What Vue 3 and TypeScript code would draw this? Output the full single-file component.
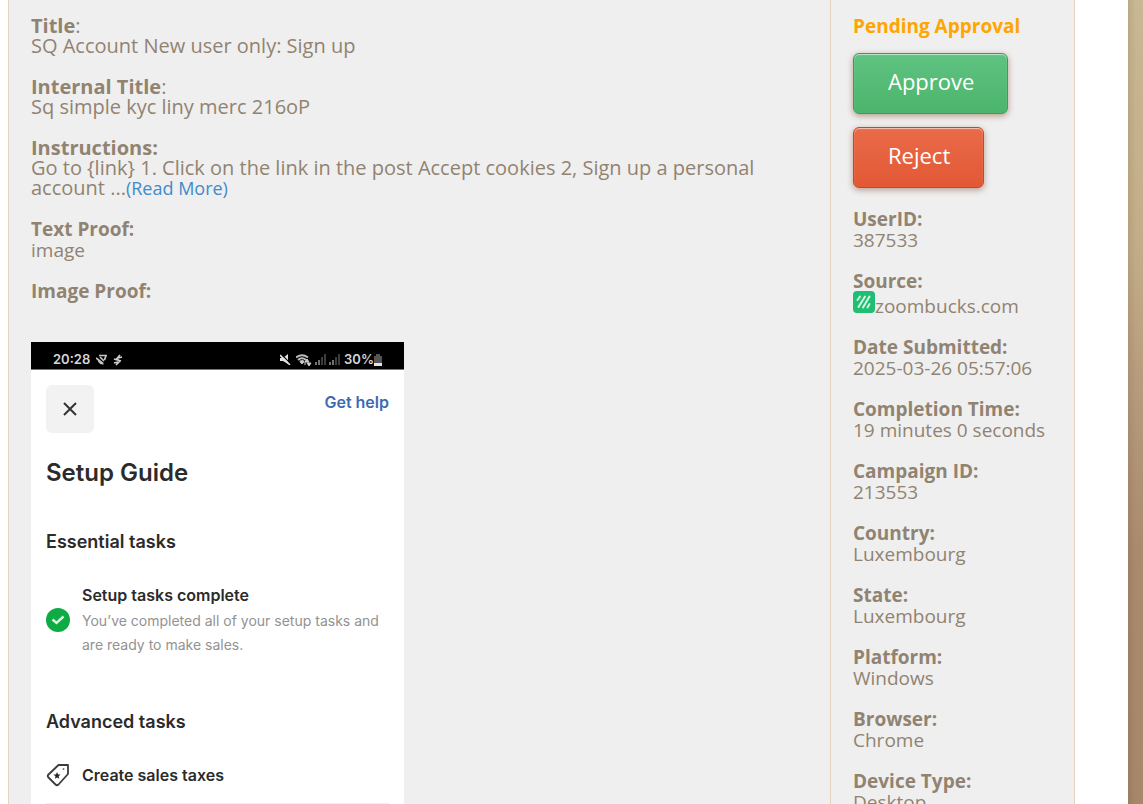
<script setup lang="ts">
interface Field {
  label: string
  value: string
  icon?: boolean
}

const details: Field[] = [
  { label: 'UserID:', value: '387533' },
  { label: 'Source:', value: 'zoombucks.com', icon: true },
  { label: 'Date Submitted:', value: '2025-03-26 05:57:06' },
  { label: 'Completion Time:', value: '19 minutes 0 seconds' },
  { label: 'Campaign ID:', value: '213553' },
  { label: 'Country:', value: 'Luxembourg' },
  { label: 'State:', value: 'Luxembourg' },
  { label: 'Platform:', value: 'Windows' },
  { label: 'Browser:', value: 'Chrome' },
  { label: 'Device Type:', value: 'Desktop' },
]
</script>

<template>
  <div class="page">
    <div class="sheet">
      <main class="submission">
        <dl class="fields large">
          <div>
            <dt><b>Title</b>:</dt>
            <dd>SQ Account New user only: Sign up</dd>
          </div>
          <div>
            <dt><b>Internal Title</b>:</dt>
            <dd>Sq simple kyc liny merc 216oP</dd>
          </div>
          <div>
            <dt><b>Instructions:</b></dt>
            <dd>
              Go to {link} 1. Click on the link in the post Accept cookies 2, Sign up a personal account ...<a class="more" href="#">(Read More)</a>
            </dd>
          </div>
        </dl>
        <dl class="fields">
          <div>
            <dt><b>Text Proof:</b></dt>
            <dd>image</dd>
          </div>
          <div>
            <dt><b>Image Proof:</b></dt>
          </div>
        </dl>

        <section class="phone">
          <div class="status">
            <span>20:28</span>
            <svg class="glyph lead" width="11" height="11" viewBox="0 0 11 11">
              <path d="M3 1.500h7L8.500 6M0 4l7 5.500M2.500 6c.5 3 3 4 5 3.500M4 3l4 4" fill="none" stroke="#c4c4c4" stroke-width="1.700" />
            </svg>
            <svg class="glyph" width="10" height="12" viewBox="0 0 10 12">
              <path d="M7 1 3.500 5 7 7 3 11M1 5l7 2M5 4l4-1M1 9l4-1" fill="none" stroke="#cfcfcf" stroke-width="1.600" />
            </svg>
            <span class="spacer"></span>
            <svg class="glyph" width="11" height="11" viewBox="0 0 11 11">
              <path d="M0 4h3l5-4v10L3 7H0z" fill="#e2e2e2" />
              <path d="M1 0l10 10" stroke="#000" stroke-width="1.200" />
              <path d="M0 1l10 10" stroke="#e2e2e2" stroke-width="1.600" />
            </svg>
            <svg class="glyph wifi" width="16" height="12" viewBox="0 0 16 12">
              <path d="M0 3.500Q6-1 12 3.500M2 6Q6 2.500 10 6M4 8q2-2 4 0" fill="none" stroke="#bdbdbd" stroke-width="2" />
              <path d="M6 10l-1.500-2h3zM11 5l2 3h-4zM13 12l-2-3h4zM9 8v3" fill="#cfcfcf" stroke="#cfcfcf" stroke-width="1" />
            </svg>
            <svg class="glyph bars" width="11" height="11" viewBox="0 0 11 11">
              <path d="M0 8h2v3H0zM3 6h2v5H3z" fill="#707070" />
              <path d="M6 3h2v8H6zM9 0h2v11H9z" fill="#3c3c3c" />
            </svg>
            <svg class="glyph bars" width="11" height="11" viewBox="0 0 11 11">
              <path d="M0 8h2v3H0zM3 6h2v5H3z" fill="#707070" />
              <path d="M6 3h2v8H6zM9 0h2v11H9z" fill="#3c3c3c" />
            </svg>
            <span>30%</span>
            <svg class="glyph" width="8" height="12" viewBox="0 0 8 12">
              <path d="M2 0h4v2h2v7H0V2h2z" fill="#555" />
              <path d="M0 9h8v3H0z" fill="#e4e4e4" />
            </svg>
          </div>

          <div class="screen">
            <div class="topbar">
              <button class="close" type="button" aria-label="Close">
                <svg width="14" height="14" viewBox="0 0 14 14">
                  <path d="M1 1l12 12M13 1L1 13" stroke="#333" stroke-width="2" />
                </svg>
              </button>
              <a class="help" href="#">Get help</a>
            </div>
            <h1>Setup Guide</h1>
            <h2>Essential tasks</h2>
            <div class="task">
              <svg width="24" height="24" viewBox="0 0 24 24">
                <circle cx="12" cy="12" r="12" fill="#0cab43" />
                <path d="M6.500 11.500l4 3.500 7-6.500" fill="none" stroke="#d9f6df" stroke-width="2.400" />
              </svg>
              <div>
                <h3>Setup tasks complete</h3>
                <p>You’ve completed all of your setup tasks and are ready to make sales.</p>
              </div>
            </div>
            <h2>Advanced tasks</h2>
            <div class="task row">
              <svg width="24" height="24" viewBox="0 0 24 24">
                <path d="M12.500 2H22v9L12.500 21.500Q11 23 9.500 21.500L2.500 14.500Q1 13 2.500 11.500z" fill="none" stroke="#3c3c3c" stroke-width="1.800" stroke-linejoin="round" />
                <path d="M11 9l1 2.500 2.600.1-2 1.600.7 2.600-2.300-1.400-2.200 1.400.7-2.600-2.100-1.600 2.600-.1z" fill="#222" />
                <circle cx="17.500" cy="6" r="1" fill="#777" />
              </svg>
              <h3>Create sales taxes</h3>
            </div>
          </div>
        </section>
      </main>

      <aside class="review">
        <b class="state">Pending Approval</b>
        <button class="action approve" type="button">Approve</button>
        <button class="action reject" type="button">Reject</button>
        <dl class="fields">
          <div v-for="field in details" :key="field.label">
            <dt><b>{{ field.label }}</b></dt>
            <dd :class="{ source: field.icon }">
              <svg v-if="field.icon" width="22" height="22" viewBox="0 0 22 22">
                <rect width="22" height="22" rx="4" fill="#1fbe72" />
                <path d="M4.500 9l2.500-3.500M5.500 16l6.500-10.500M10 16.500l6.500-11M14.500 16.500l2-3.500" stroke="#d5f7df" stroke-width="2" stroke-linecap="round" />
              </svg>
              <span>{{ field.value }}</span>
            </dd>
          </div>
        </dl>
      </aside>
    </div>
  </div>
</template>

<style>
body {
  margin: 0;
}
</style>

<style scoped>
* {
  box-sizing: border-box;
}

.page {
  padding-right: 15px;
  background:
    linear-gradient(to left, transparent 0, transparent 7px, rgba(70, 40, 20, 0.1) 15px),
    linear-gradient(#c8b893 0%, #c3ad88 30%, #b4997a 50%, #a98a6d 68%, #a78769 100%);
  color: #918371;
  font-family: "Open Sans", sans-serif;
  font-size: 19px;
  line-height: 21px;
}

.sheet {
  display: flex;
  min-height: 100vh;
  padding: 0 53px 0 8px;
  background: #fff;
}

.submission,
.review {
  background: #efefef;
  border-left: 1px solid #e5d3c0;
}

.submission {
  flex: 1;
  padding: 16px 22px 0;
}

.review {
  display: flex;
  flex-direction: column;
  align-items: flex-start;
  width: 245px;
  padding: 16px 20px 0 22px;
  border-right: 1px solid #e5d3c0;
}

.fields,
dd,
h1,
h2,
h3,
p {
  margin: 0;
}

.fields {
  display: flex;
  flex-direction: column;
  gap: 20px;
}

.large {
  gap: 21px;
  margin-bottom: 21px;
  max-width: 740px;
  font-size: 20px;
  line-height: 20px;
}

.more {
  color: #428bca;
  font-size: 18px;
  text-decoration: none;
}

.source {
  display: flex;
  align-items: flex-start;
  height: 25px;
}

.source svg {
  margin-top: -1px;
}

.source span {
  padding-top: 4px;
}

.state {
  color: #ffa500;
}

.action {
  height: 61px;
  padding: 0 33px 6px 34px;
  border: 1px solid;
  border-radius: 6px;
  box-shadow: inset 0 1px 1px rgba(255, 255, 255, 0.6), 0 2px 6px rgba(110, 50, 20, 0.45);
  color: #fff;
  font: 22px "Open Sans", sans-serif;
}

.approve {
  margin-top: 16px;
  border-color: #3c9c59;
  background: linear-gradient(#5fc282, #4bb56b);
}

.reject {
  margin: 13px 0 21px;
  border-color: #c24a2a;
  background: linear-gradient(#e96b49, #e35835);
}

.phone {
  width: 373px;
  max-width: 100%;
  margin-top: 40px;
  background: #fff;
  color: #2b2b2b;
  font-family: Inter, sans-serif;
}

.status {
  display: flex;
  align-items: center;
  height: 28px;
  padding: 8px 22px 0;
  border-bottom: 1px solid #777;
  background: #000;
  color: #d6d6d6;
  font-size: 13px;
  font-weight: 600;
}

.lead {
  margin: 0 6px;
}

.spacer {
  flex: 1;
}

.wifi {
  margin-left: 5px;
}

.bars {
  margin: 0 0 0 3px;
}

.bars + span {
  margin-left: 4px;
}

.screen {
  padding: 15px 15px 0;
}

.topbar {
  display: flex;
  align-items: flex-start;
  justify-content: space-between;
}

.close {
  display: grid;
  place-items: center;
  width: 48px;
  height: 48px;
  padding: 0;
  border: 0;
  border-radius: 6px;
  background: #f2f2f2;
}

.help {
  padding-top: 7px;
  color: #3d6bb3;
  font-size: 16px;
  font-weight: 600;
  text-decoration: none;
}

h1 {
  margin-top: 25px;
  font-size: 24px;
  font-weight: 600;
  line-height: 30px;
}

h2 {
  margin-top: 42px;
  font-size: 18px;
  font-weight: 600;
  line-height: 24px;
}

h3 {
  font-size: 16px;
  font-weight: 600;
  line-height: 24px;
}

.task {
  display: flex;
  align-items: center;
  gap: 12px;
  margin: 29px 0 53px;
}

.task svg {
  flex: none;
}

.task p {
  padding-top: 2px;
  color: #929292;
  font-size: 14px;
  line-height: 24px;
}

.row {
  margin: 29px 0 0;
  padding-bottom: 16px;
  border-bottom: 1px solid #eee;
}
</style>
